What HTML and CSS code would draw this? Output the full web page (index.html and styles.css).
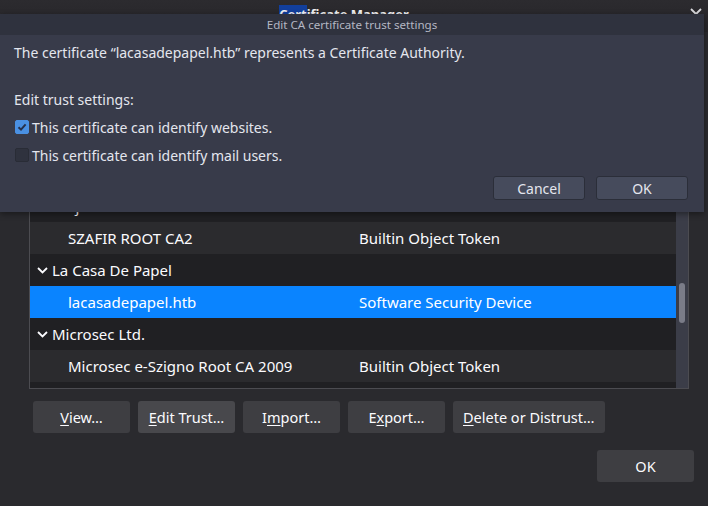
FILE: index.html
```html
<!DOCTYPE html>
<html>
<head>
<meta charset="utf-8">
<title>Certificate Manager</title>
<link rel="stylesheet" href="styles.css">
</head>
<body>
<div class="app">
  <div class="titlebar">
    <span class="title"><span class="sel">Cert</span>ificate Manager</span>
    <svg class="close" width="12" height="12" viewBox="0 0 12 12"><path d="M1 1 L11 11 M11 1 L1 11" stroke="#d8d8dc" stroke-width="1.8" fill="none"/></svg>
  </div>
  <div class="content">
    <div class="list">
      <div class="rows">
        <div class="row head"></div>
        <div class="row group"></div>
        <div class="row child"></div>
        <div class="row group"></div>
        <div class="row child"></div>
        <div class="row group"><div class="c1"><svg class="chev" width="11" height="7" viewBox="0 0 11 7"><path d="M1 1 L5.5 5.5 L10 1" stroke="#fbfbfe" stroke-width="1.8" fill="none"/></svg>Krajowa Izba Rozliczeniowa S.A.</div><div class="c2"></div></div>
        <div class="row child"><div class="c1">SZAFIR ROOT CA2</div><div class="c2">Builtin Object Token</div></div>
        <div class="row group"><div class="c1"><svg class="chev" width="11" height="7" viewBox="0 0 11 7"><path d="M1 1 L5.5 5.5 L10 1" stroke="#fbfbfe" stroke-width="1.8" fill="none"/></svg>La Casa De Papel</div><div class="c2"></div></div>
        <div class="row child selected"><div class="c1">lacasadepapel.htb</div><div class="c2">Software Security Device</div></div>
        <div class="row group"><div class="c1"><svg class="chev" width="11" height="7" viewBox="0 0 11 7"><path d="M1 1 L5.5 5.5 L10 1" stroke="#fbfbfe" stroke-width="1.8" fill="none"/></svg>Microsec Ltd.</div><div class="c2"></div></div>
        <div class="row child"><div class="c1">Microsec e-Szigno Root CA 2009</div><div class="c2">Builtin Object Token</div></div>
        <div class="row group"></div>
      </div>
      <div class="scrollbar"><div class="thumb"></div></div>
    </div>
    <div class="actions">
      <button class="btn"><u>V</u>iew…</button>
      <button class="btn focus"><u>E</u>dit Trust…</button>
      <button class="btn">I<u>m</u>port…</button>
      <button class="btn">E<u>x</u>port…</button>
      <button class="btn"><u>D</u>elete or Distrust…</button>
    </div>
    <div class="footer">
      <button class="btn ok">OK</button>
    </div>
  </div>
</div>

<div class="dialog">
  <div class="dlg-title">Edit CA certificate trust settings</div>
  <div class="dlg-body">
    <p class="intro">The certificate “lacasadepapel.htb” represents a Certificate Authority.</p>
    <p class="label">Edit trust settings:</p>
    <label class="check first"><span class="box checked"><svg width="14" height="14" viewBox="0 0 14 14"><path d="M3.5 7.2 L6 9.6 L10.6 4.4" stroke="#26304a" stroke-width="2" fill="none"/></svg></span>This certificate can identify websites.</label>
    <label class="check"><span class="box"></span>This certificate can identify mail users.</label>
    <div class="dlg-buttons">
      <button class="dbtn">Cancel</button>
      <button class="dbtn">OK</button>
    </div>
  </div>
</div>
</body>
</html>
```

FILE: styles.css
```css
html, body {
  margin: 0;
  padding: 0;
}
body {
  width: 708px;
  height: 506px;
  overflow: hidden;
  background: #2a2a2e;
  font-family: "Noto Sans", "Open Sans", sans-serif;
  color: #fbfbfe;
  position: relative;
}
.app {
  display: flex;
  flex-direction: column;
  height: 506px;
}
.titlebar {
  height: 32px;
  box-sizing: border-box;
  padding: 4px 20px 0 0;
  display: flex;
  justify-content: center;
  align-items: flex-start;
  background: linear-gradient(#2c2b2f, #262529);
  position: relative;
}
.title {
  font-weight: bold;
  font-size: 13px;
  line-height: 20px;
  color: #f0f0f2;
}
.title .sel {
  background: #123f9c;
}
.close {
  position: absolute;
  right: 6px;
  top: 8px;
}
.content {
  padding: 8px 0 0 29px;
}
.list {
  width: 660px;
  height: 349px;
  box-sizing: border-box;
  border: 1px solid #4c4c51;
  display: flex;
  overflow: hidden;
  background: #202023;
}
.rows {
  width: 646px;
  overflow: hidden;
}
.row {
  display: grid;
  grid-template-columns: 329px 1fr;
  height: 32px;
  align-items: center;
  font-size: 15px;
  white-space: nowrap;
}
.row:nth-child(even) {
  background: #202023;
}
.row:nth-child(odd) {
  background: #2b2b2e;
}
.row.head {
  height: 21px;
  background: #323236;
}
.row.selected {
  background: #0a84ff;
  color: #ffffff;
}
.child .c1 {
  padding-left: 38px;
}
.group .c1 {
  padding-left: 7px;
  display: flex;
  align-items: center;
}
.chev {
  margin-right: 4px;
}
.scrollbar {
  width: 12px;
  background: #3b3d48;
  position: relative;
}
.thumb {
  position: absolute;
  left: 3px;
  top: 242px;
  width: 6px;
  height: 40px;
  border-radius: 3px;
  background: #7a7c88;
}
.actions {
  display: flex;
  gap: 8px;
  margin-top: 12px;
  padding-left: 4px;
}
.btn {
  font-family: "Noto Sans", "Open Sans", sans-serif;
  font-size: 14.5px;
  color: #fbfbfe;
  background: #3e3e42;
  border: none;
  border-radius: 3px;
  height: 32px;
  min-width: 97px;
  padding: 0 10px;
}
.btn.focus {
  background: #48484c;
}
.btn u {
  text-underline-offset: 2px;
}
.footer {
  display: flex;
  justify-content: flex-end;
  padding-right: 14px;
  margin-top: 17px;
}

/* modal dialog over the main window */
.dialog {
  position: absolute;
  top: 14px;
  left: 0;
  width: 704px;
  height: 198px;
  background: #383b4a;
  color: #e4e6ee;
  box-shadow: 0 2px 6px rgba(0, 0, 0, 0.4);
  display: flex;
  flex-direction: column;
}
.dlg-title {
  height: 21px;
  background: #2f323e;
  font-size: 11.6px;
  line-height: 21px;
  text-align: center;
  color: #b4b7c3;
}
.dlg-body {
  padding: 8px 16px 0 14px;
  font-size: 14px;
  display: flex;
  flex-direction: column;
}
.dlg-body p {
  margin: 0;
  line-height: 20px;
}
.label {
  margin-top: 27px !important;
}
.check {
  display: flex;
  align-items: center;
  height: 20px;
  margin-top: 8px;
}
.check.first {
  margin-top: 7px;
}
.box {
  width: 14px;
  height: 14px;
  box-sizing: border-box;
  border-radius: 2px;
  background: #2f323e;
  border: 1px solid #292c36;
  margin: 0 3px 0 1px;
  display: flex;
}
.box.checked {
  background: #4a90e2;
  border-color: #4a90e2;
}
.box svg {
  margin: -1px;
}
.dlg-buttons {
  display: flex;
  justify-content: flex-end;
  gap: 11px;
  margin-top: 11px;
}
.dbtn {
  font-family: "Noto Sans", "Open Sans", sans-serif;
  font-size: 14px;
  color: #e4e6ee;
  width: 92px;
  height: 24px;
  background: #464b5c;
  border: 1px solid #2b2e39;
  border-radius: 3px;
  padding: 0;
}
```
